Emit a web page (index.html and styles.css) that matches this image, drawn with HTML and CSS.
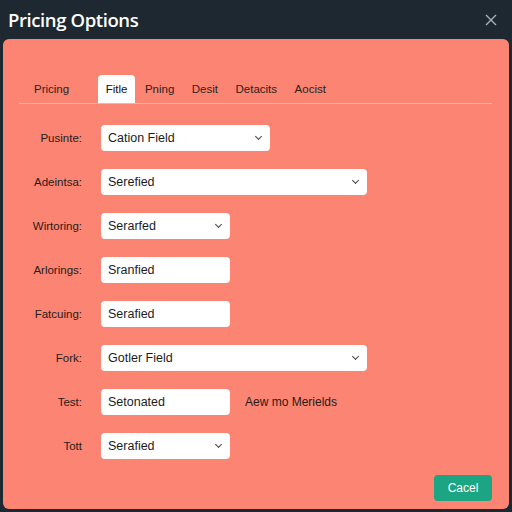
FILE: index.html
```html
<!DOCTYPE html>
<html lang="en">
<head>
    <meta charset="UTF-8">
    <meta name="viewport" content="width=device-width, initial-scale=1.0">
    <title>Pricing Options</title>
    <link rel="stylesheet" href="styles.css">
</head>
<body>
    <header class="topbar">
        <h1>Pricing Options</h1>
        <svg class="close" width="12" height="12" viewBox="0 0 12 12">
            <path d="M1 1L11 11M11 1L1 11" stroke="#aab3ba" stroke-width="1.4" fill="none"/>
        </svg>
    </header>
    <section class="panel">
        <nav class="tabs">
            <span class="tab first">Pricing</span>
            <span class="tab active">Fitle</span>
            <span class="tab">Pning</span>
            <span class="tab">Desit</span>
            <span class="tab">Detacits</span>
            <span class="tab">Aocist</span>
        </nav>
        <div class="form">
            <label>Pusinte:</label>
            <div class="row"><div class="field mid select">Cation Field</div></div>

            <label>Adeintsa:</label>
            <div class="row"><div class="field long select">Serefied</div></div>

            <label>Wirtoring:</label>
            <div class="row"><div class="field short select">Serarfed</div></div>

            <label>Arlorings:</label>
            <div class="row"><div class="field short">Sranfied</div></div>

            <label>Fatcuing:</label>
            <div class="row"><div class="field short">Serafied</div></div>

            <label>Fork:</label>
            <div class="row"><div class="field long select">Gotler Field</div></div>

            <label>Test:</label>
            <div class="row"><div class="field short">Setonated</div><span class="note">Aew mo Merields</span></div>

            <label>Tott</label>
            <div class="row"><div class="field short select">Serafied</div></div>
        </div>
        <div class="actions">
            <button class="btn">Cacel</button>
        </div>
    </section>
</body>
</html>
```

FILE: styles.css
```css
body{
 margin: 0;
 width: 512px;
 height: 512px;
 background-color: #1e2830;
 font-family: "Liberation Sans", Arial, sans-serif;
 overflow: hidden;
}
.topbar{
 height: 39px;
 display: flex;
 align-items: center;
 justify-content: space-between;
 padding: 0 15px 0 8px;
 box-sizing: border-box;
}
h1{
 margin: 0 0 1px 0;
 color: #ffffff;
 font-family: "Open Sans", sans-serif;
 font-size: 18.5px;
 font-weight: 600;
 letter-spacing: -0.4px;
}
.close{
 display: block;
}
.panel{
 margin: 0 3px;
 height: 470px;
 background-color: #fb8472;
 border-radius: 6px;
 padding: 36px 17px 0 16px;
 box-sizing: border-box;
 display: flex;
 flex-direction: column;
}
.tabs{
 display: flex;
 gap: 1.5px;
 border-bottom: 1px solid #fcb0a2;
 height: 28px;
}
.tab{
 padding: 0 8px;
 font-size: 11.5px;
 color: #2b2320;
 line-height: 28px;
}
.tab.first{
 padding-left: 15px;
 margin-right: 19px;
}
.tab.active{
 background-color: #ffffff;
 border-radius: 4px 4px 0 0;
 color: #111;
}
.form{
 margin-top: 21px;
 display: grid;
 grid-template-columns: 63px auto;
 column-gap: 19px;
 row-gap: 18px;
 align-items: center;
}
label{
 text-align: right;
 font-size: 11.5px;
 color: #2a1c18;
}
.row{
 display: flex;
 align-items: center;
}
.field{
 height: 26px;
 line-height: 26px;
 background-color: #ffffff;
 border-radius: 4px;
 padding-left: 7px;
 box-sizing: border-box;
 font-size: 12.5px;
 color: #1c1c1c;
 position: relative;
}
.short{
 width: 129px;
}
.mid{
 width: 169px;
}
.long{
 width: 266px;
}
.select::after{
 content: "";
 position: absolute;
 right: 9px;
 top: 9px;
 width: 4px;
 height: 4px;
 border-right: 1.2px solid #444;
 border-bottom: 1.2px solid #444;
 transform: rotate(45deg);
}
.note{
 margin-left: 15px;
 font-size: 12px;
 color: #2a1c18;
}
.actions{
 margin-top: auto;
 margin-bottom: 8px;
 display: flex;
 justify-content: flex-end;
}
.btn{
 width: 58px;
 height: 26px;
 border: none;
 border-radius: 4px;
 background-color: #1ba583;
 color: #ffffff;
 font-family: inherit;
 font-size: 12px;
}
```
